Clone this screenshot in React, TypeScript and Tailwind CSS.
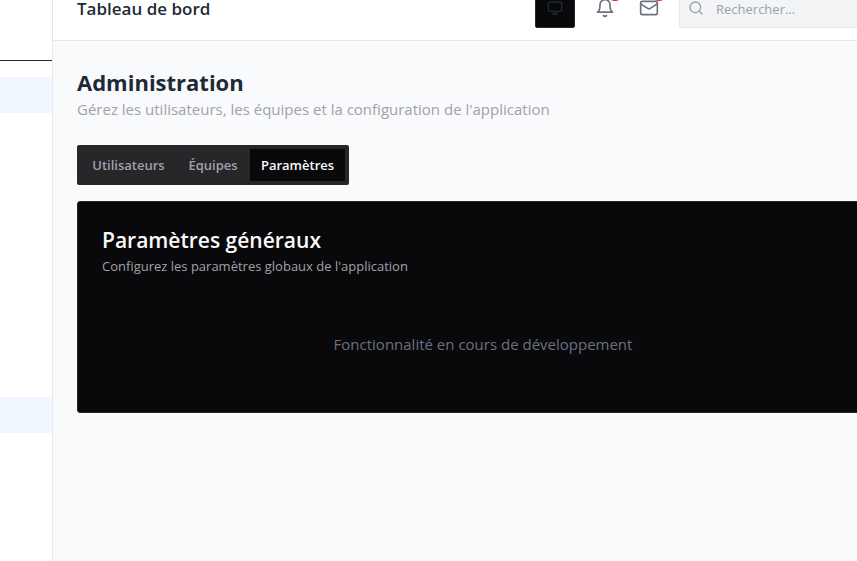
import { Mail, Monitor, Search } from "lucide-react";

const navItems = [true, false, false, false, false, false, false, false, true];

const tabs = [
  { label: "Utilisateurs", active: false, width: "w-[95px]" },
  { label: "Équipes", active: false, width: "w-[74px]" },
  { label: "Paramètres", active: true, width: "w-[95px]" },
];

function BellIcon() {
  return (
    <svg width="20" height="20" viewBox="0 0 24 24" fill="none" stroke="currentColor" strokeWidth="2" strokeLinecap="round" strokeLinejoin="round" aria-hidden="true">
      <path d="M6 8a6 6 0 0 1 12 0c0 7 3 9 3 9H3s3-2 3-9" />
      <path d="M10.3 21a1.94 1.94 0 0 0 3.4 0" />
    </svg>
  );
}

function Sidebar() {
  return (
    <aside className="w-[53px] shrink-0 border-r border-gray-200 bg-white">
      <div className="h-[61px] border-b border-zinc-800" />
      <nav className="flex flex-col gap-1 py-4">
        {navItems.map((highlighted, i) => (
          <div key={i} className={highlighted ? "h-9 bg-[#eff6ff]" : "h-9"} />
        ))}
      </nav>
    </aside>
  );
}

function Header() {
  return (
    <header className="-mt-6 flex h-[65px] items-center gap-3 border-b border-gray-200 bg-white px-6">
      <h1 className="flex-1 pt-0.5 text-[17px] leading-4 font-semibold text-[#1f2937]">Tableau de bord</h1>
      <button type="button" aria-label="Affichage" className="flex size-10 items-center justify-center rounded-[2px] border border-zinc-800 bg-[#09090b] text-[#1f2937]">
        <Monitor size={16} />
      </button>
      <div className="flex gap-2">
        <button type="button" aria-label="Notifications" className="relative flex size-9 items-center justify-center text-gray-500">
          <BellIcon />
          <span className="absolute -top-[5px] right-0 size-4 rounded-full bg-[#dc2626]" />
        </button>
        <button type="button" aria-label="Messages" className="relative flex size-9 items-center justify-center text-gray-500">
          <Mail size={20} />
          <span className="absolute -top-[5px] right-0 size-4 rounded-full bg-[#dc2626]" />
        </button>
      </div>
      <label className="flex h-10 w-[210px] items-center gap-3 rounded-[2px] border border-gray-200 bg-gray-100 px-2">
        <Search size={16} className="shrink-0 text-gray-400" />
        <input type="text" aria-label="Rechercher" placeholder="Rechercher..." className="w-full min-w-0 bg-transparent pt-1 text-[13px] text-gray-800 outline-none placeholder:text-gray-400" />
      </label>
    </header>
  );
}

export default function App() {
  return (
    <div className="h-screen overflow-hidden font-['Open_Sans','Noto_Sans',sans-serif]">
      <div className="-mr-14 flex h-full bg-[#f9fafb]">
        <Sidebar />
        <div className="min-w-0 flex-1">
          <Header />
          <main className="p-6">
            <h2 className="pt-0.5 text-[22px] leading-[30px] font-bold text-[#1f2937]">Administration</h2>
            <p className="text-[15px] leading-6 text-[#a1a1aa]">
              Gérez les utilisateurs, les équipes et la configuration de l'application
            </p>
            <div role="tablist" className="mt-6 inline-flex h-10 items-center rounded-[2px] bg-zinc-800 p-1 align-top">
              {tabs.map((tab) => (
                <button
                  key={tab.label}
                  type="button"
                  role="tab"
                  aria-selected={tab.active}
                  className={`${tab.width} h-8 pt-0.5 text-center text-[13px] font-semibold ${tab.active ? "bg-[#09090b] text-[#fafafa]" : "text-[#a1a1aa]"}`}
                >
                  {tab.label}
                </button>
              ))}
            </div>
            <section className="mt-4 rounded-[3px] border border-zinc-800 bg-[#09090b] p-6">
              <h3 className="text-[21px] leading-7 font-semibold text-[#fafafa]">Paramètres généraux</h3>
              <p className="mt-0.5 text-[13px] leading-5 text-[#a1a1aa]">
                Configurez les paramètres globaux de l'application
              </p>
              <p className="pt-14 pb-8 text-center text-[15px] leading-6 text-gray-500">
                Fonctionnalité en cours de développement
              </p>
            </section>
          </main>
        </div>
      </div>
    </div>
  );
}
